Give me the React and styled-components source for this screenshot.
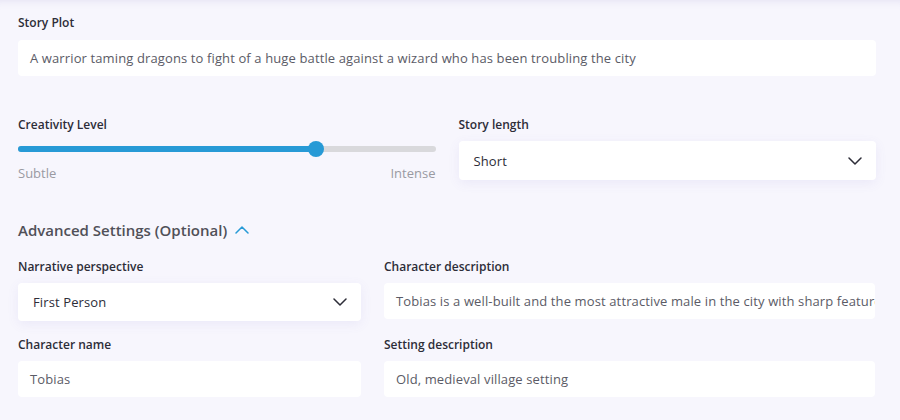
import React from 'react';
import styled, { createGlobalStyle } from 'styled-components';

const GlobalStyle = createGlobalStyle`
  html, body {
    margin: 0;
    padding: 0;
    background: #f7f6fd;
  }
  body {
    font-family: "Open Sans", "Liberation Sans", sans-serif;
  }
`;

const Page = styled.div`
  min-height: 420px;
  box-sizing: border-box;
  padding: 15px 24px 0 18px;
  background: #f7f6fd;
  box-shadow: inset 0 9px 10px -9px rgba(120, 110, 190, 0.18);
`;

const Label = styled.div`
  font-size: 12px;
  line-height: 16px;
  font-weight: 600;
  color: #2d2d38;
  margin-bottom: ${({ gap }) => (gap === undefined ? 10 : gap)}px;
`;

const TextBox = styled.div`
  height: 36px;
  box-sizing: border-box;
  background: #fff;
  border-radius: 4px;
  padding: 0 12px;
  display: flex;
  align-items: center;
  font-size: 13px;
  letter-spacing: 0.12px;
  color: #5b5b66;
  white-space: nowrap;
  overflow: hidden;
`;

const Select = styled.div`
  height: ${({ h }) => h || 38}px;
  box-sizing: border-box;
  background: #fff;
  border-radius: 4px;
  padding: 0 14px 0 15px;
  display: flex;
  align-items: center;
  justify-content: space-between;
  font-size: 13px;
  letter-spacing: 0.12px;
  color: #2d2d38;
  box-shadow: 0 3px 12px rgba(110, 100, 200, 0.09);
`;

const TwoCols = styled.div`
  display: grid;
  grid-template-columns: minmax(0, 1fr) minmax(0, 1fr);
  column-gap: 23px;
  margin-top: 41px;
`;

const Slider = styled.div`
  position: relative;
  height: 16px;
  margin-top: 8px;
`;

const Track = styled.div`
  position: absolute;
  left: 0;
  right: 0;
  top: 5px;
  height: 6px;
  border-radius: 3px;
  background: #d9d9dc;
`;

const Fill = styled.div`
  position: absolute;
  left: 0;
  top: 5px;
  height: 6px;
  border-radius: 3px;
  background: #279ad6;
`;

const Thumb = styled.div`
  position: absolute;
  top: 0;
  width: 16px;
  height: 16px;
  margin-left: -8px;
  border-radius: 50%;
  background: #279ad6;
`;

const Ends = styled.div`
  display: flex;
  justify-content: space-between;
  font-size: 13px;
  line-height: 16px;
  color: #9a9aa2;
  margin-top: 8px;
`;

const Advanced = styled.div`
  display: flex;
  align-items: center;
  gap: 8px;
  margin-top: 39px;
  font-size: 15px;
  line-height: 20px;
  font-weight: 600;
  color: #505058;
`;

const Grid = styled.div`
  display: grid;
  grid-template-columns: 343px minmax(0, 1fr);
  column-gap: 23px;
  row-gap: 16px;
  margin-top: 19px;
  padding-right: 1px;
`;

const Chevron = ({ up, color = '#2d2d38' }) => (
  <svg width="14" height="8" viewBox="0 0 14 8" fill="none">
    <polyline
      points={up ? '1,7 7,1 13,7' : '1,1 7,7 13,1'}
      stroke={color}
      strokeWidth="1.5"
      strokeLinecap="round"
      strokeLinejoin="round"
    />
  </svg>
);

const Field = ({ label, gap, children }) => (
  <div>
    <Label gap={gap}>{label}</Label>
    {children}
  </div>
);

export default function App() {
  const level = 71.3;
  return (
    <Page>
      <GlobalStyle />
      <Field label="Story Plot" gap={9}>
        <TextBox>
          A warrior taming dragons to fight of a huge battle against a wizard who has been troubling the city
        </TextBox>
      </Field>

      <TwoCols>
        <div>
          <Label gap={0}>Creativity Level</Label>
          <Slider>
            <Track />
            <Fill style={{ width: `${level}%` }} />
            <Thumb style={{ left: `${level}%` }} />
          </Slider>
          <Ends>
            <span>Subtle</span>
            <span>Intense</span>
          </Ends>
        </div>
        <div>
          <Label gap={8}>Story length</Label>
          <Select h={39}>
            <span>Short</span>
            <Chevron />
          </Select>
        </div>
      </TwoCols>

      <Advanced>
        Advanced Settings (Optional)
        <Chevron up color="#279ad6" />
      </Advanced>

      <Grid>
        <Field label="Narrative perspective" gap={8}>
          <Select>
            <span>First Person</span>
            <Chevron />
          </Select>
        </Field>
        <Field label="Character description" gap={8}>
          <TextBox>
            Tobias is a well-built and the most attractive male in the city with sharp features and a commanding presence
          </TextBox>
        </Field>
        <Field label="Character name" gap={8}>
          <TextBox>Tobias</TextBox>
        </Field>
        <Field label="Setting description" gap={8}>
          <TextBox>Old, medieval village setting</TextBox>
        </Field>
      </Grid>
    </Page>
  );
}
